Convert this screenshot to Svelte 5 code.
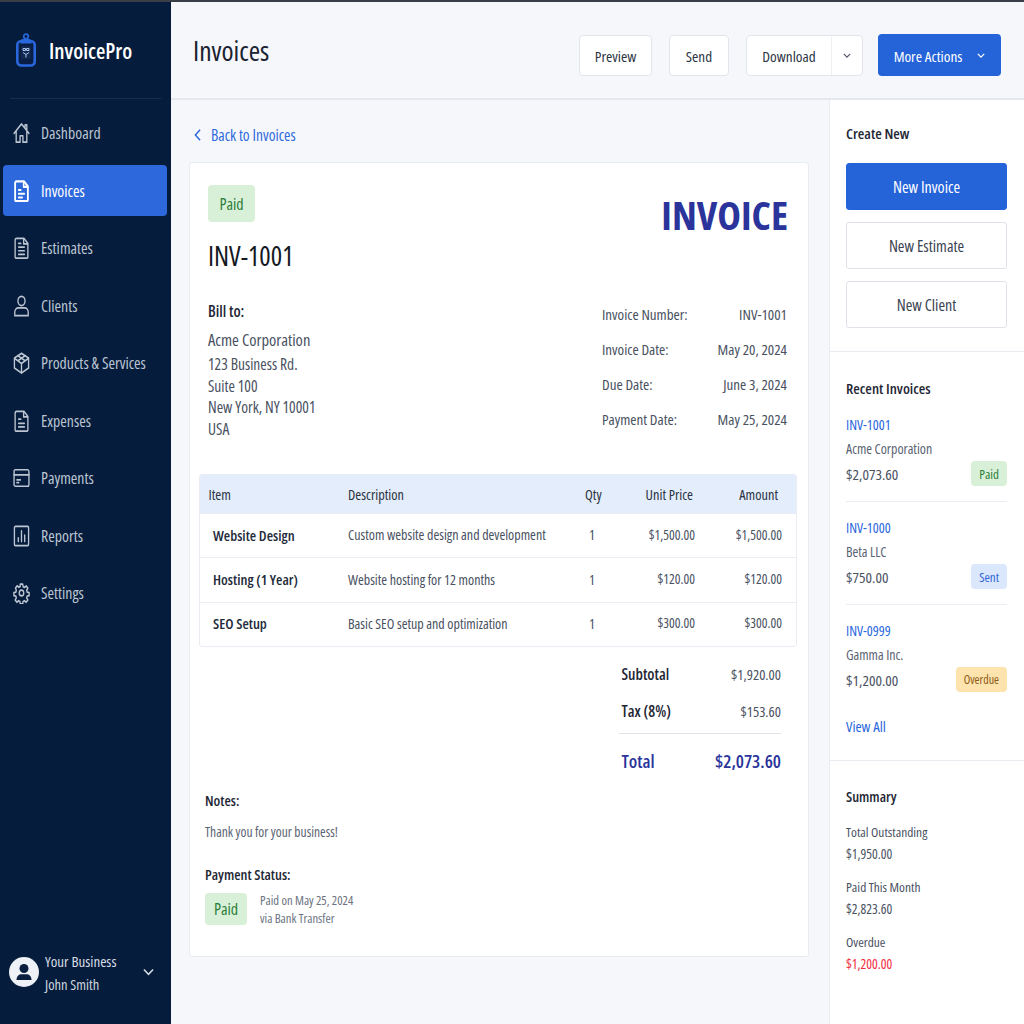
<script>
  const nav = [
    { label: 'Dashboard', icon: 'home' },
    { label: 'Invoices', icon: 'invoice', active: true },
    { label: 'Estimates', icon: 'doc' },
    { label: 'Clients', icon: 'user' },
    { label: 'Products & Services', icon: 'box' },
    { label: 'Expenses', icon: 'expense' },
    { label: 'Payments', icon: 'card' },
    { label: 'Reports', icon: 'chart' },
    { label: 'Settings', icon: 'gear' }
  ];
  const rows = [
    ['Website Design', 'Custom website design and development', '1', '$1,500.00', '$1,500.00'],
    ['Hosting (1 Year)', 'Website hosting for 12 months', '1', '$120.00', '$120.00'],
    ['SEO Setup', 'Basic SEO setup and optimization', '1', '$300.00', '$300.00']
  ];
  const meta = [
    ['Invoice Number:', 'INV-1001'],
    ['Invoice Date:', 'May 20, 2024'],
    ['Due Date:', 'June 3, 2024'],
    ['Payment Date:', 'May 25, 2024']
  ];
  const recent = [
    { id: 'INV-1001', client: 'Acme Corporation', amount: '$2,073.60', status: 'Paid', cls: 'paid' },
    { id: 'INV-1000', client: 'Beta LLC', amount: '$750.00', status: 'Sent', cls: 'sent' },
    { id: 'INV-0999', client: 'Gamma Inc.', amount: '$1,200.00', status: 'Overdue', cls: 'overdue' }
  ];
  const summary = [
    ['Total Outstanding', '$1,950.00', ''],
    ['Paid This Month', '$2,823.60', ''],
    ['Overdue', '$1,200.00', 'red']
  ];
</script>

<div class="app">
  <aside class="sidebar">
    <div class="brand">
      <svg class="logo" viewBox="0 0 22 34" width="22" height="34" fill="none">
        <circle cx="11" cy="3.500" r="2.300" stroke="#2867dc" stroke-width="1.700"/>
        <rect x="2.300" y="8" width="17.400" height="24.500" rx="4" fill="#0a1d44" stroke="#2867dc" stroke-width="2.600"/>
        <path d="M5.500 10.500V8.500C5.500 7 6.500 6 8 6h6c1.500 0 2.500 1 2.500 2.500v2z" fill="#2867dc"/>
        <rect x="6" y="13" width="10" height="13" rx="1" fill="#12294f"/>
        <path d="M8 15.500h2.500v2H8zM11.500 15.500H14v2h-2.500zM8 19.500l3 2 3-2M11 21.500v3" stroke="#a9c3ee" stroke-width="1"/>
      </svg>
      <span class="brand-name">InvoicePro</span>
    </div>
    <nav class="nav">
      {#each nav as item}
        <a class="nav-item" class:active={item.active} href="#top">
          <svg viewBox="0 0 24 24" width="17" height="22" preserveAspectRatio="none" fill="none" stroke="currentColor" stroke-width="1.900" stroke-linecap="round" stroke-linejoin="round">
            {#if item.icon === 'home'}
              <path d="M1.500 12.500 12 2l10.500 10.500M4.500 10v12h5.500v-7h4v7h5.500V10M17 6V3h2.500v5.500"/>
            {:else if item.icon === 'invoice'}
              <path d="M3 3A2 2 0 0 1 5 1.500h10.500L21 7v15a1.500 1.500 0 0 1-1.500 1H4.500A1.500 1.500 0 0 1 3 22z" stroke-width="2.600"/>
              <path d="M15 2v5.500h5.500M8 11h3M8 15h8M8 19h5" stroke-width="2.200"/>
            {:else if item.icon === 'doc'}
              <path d="M3 3A2 2 0 0 1 5 1.500h10.500L21 7v15a1.500 1.500 0 0 1-1.500 1H4.500A1.500 1.500 0 0 1 3 22z"/>
              <path d="M15 2v5.500h5.500M8 7h3M8 11h8M8 15h8M8 19h8"/>
            {:else if item.icon === 'user'}
              <circle cx="12" cy="6.500" r="5"/>
              <path d="M2.500 22.500v-3.500c0-3 2.500-5 5-5h9c2.500 0 5 2 5 5v3.500z"/>
            {:else if item.icon === 'box'}
              <path d="M12 1.500 22 6.500v11L12 23 2 17.500v-11z"/>
              <path d="M2.500 7 12 12.500 21.500 7M12 12.500V22.500M7 4l10 5.500M17 4 7 9.500"/>
            {:else if item.icon === 'expense'}
              <path d="M3 3A2 2 0 0 1 5 1.500h10.500L21 7v15a1.500 1.500 0 0 1-1.500 1H4.500A1.500 1.500 0 0 1 3 22z"/>
              <path d="M15 2v5.500h5.500M8 10h3M8 14.500h8M8 18.500h8"/>
            {:else if item.icon === 'card'}
              <rect x="1.500" y="3" width="21" height="18" rx="2"/>
              <path d="M1.500 8.500h21M5.500 14h5M5.500 17h2.500"/>
            {:else if item.icon === 'chart'}
              <rect x="2" y="1.500" width="20" height="21" rx="1.500"/>
              <path d="M7.500 18v-4M12 18V6.500M16.500 18v-7"/>
            {:else}
              <circle cx="12" cy="12" r="3.200"/>
              <path d="M10.300 2.500h3.400l.5 2.800 1.800.8 2.400-1.600 2.300 2.400-1.600 2.300.7 1.800 2.700.5v3.300l-2.700.5-.7 1.800 1.600 2.400-2.300 2.300-2.400-1.600-1.800.8-.5 2.700h-3.400l-.5-2.700-1.800-.8-2.400 1.600-2.300-2.300 1.600-2.400-.7-1.800-2.700-.5v-3.300l2.700-.5.700-1.800L3.700 6.700 6 4.300l2.400 1.600 1.800-.8z" transform="translate(-.3 -.3) scale(1.025)"/>
            {/if}
          </svg>
          <span>{item.label}</span>
        </a>
      {/each}
    </nav>
    <div class="account">
      <svg class="avatar" viewBox="0 0 30 30" width="30" height="30">
        <circle cx="15" cy="15" r="15" fill="#eef1f5"/>
        <circle cx="15" cy="11.500" r="4.500" fill="#0a1f40"/>
        <path d="M7.500 23c0-4 2.500-5.800 5-5.800h5c2.500 0 5 1.800 5 5.800z" fill="#0a1f40"/>
      </svg>
      <div class="account-text">
        <div class="biz">Your Business</div>
        <div class="person">John Smith</div>
      </div>
      <svg class="account-chev" viewBox="0 0 12 8" width="11" height="8" fill="none" stroke="#d3d9e2" stroke-width="1.700"><path d="M1 1.200 6 6.500l5-5.300"/></svg>
    </div>
  </aside>

  <div class="content">
    <header class="topbar">
      <h1>Invoices</h1>
      <div class="actions">
        <button class="btn preview">Preview</button>
        <button class="btn send">Send</button>
        <div class="btn split">
          <span class="split-label">Download</span>
          <span class="split-caret">
            <svg viewBox="0 0 10 6" width="8" height="5" fill="none" stroke="#4a5568" stroke-width="1.400"><path d="M1 1l4 4 4-4"/></svg>
          </span>
        </div>
        <button class="btn primary">
          More Actions
          <svg viewBox="0 0 10 6" width="8" height="5" fill="none" stroke="#fff" stroke-width="1.600"><path d="M1 1l4 4 4-4"/></svg>
        </button>
      </div>
    </header>

    <div class="body">
      <main class="main">
        <a class="back" href="#top">
          <svg viewBox="0 0 8 14" width="7" height="12" fill="none" stroke="#2a66dc" stroke-width="1.700"><path d="M7 1 1.500 7 7 13"/></svg>
          Back to Invoices
        </a>
        <section class="card">
          <div class="card-head">
            <div>
              <span class="badge-lg">Paid</span>
              <div class="inv-no">INV-1001</div>
            </div>
            <div class="inv-word">INVOICE</div>
          </div>

          <div class="parties">
            <div class="bill">
              <div class="bill-title">Bill to:</div>
              <div class="bill-name">Acme Corporation</div>
              <div>123 Business Rd.</div>
              <div>Suite 100</div>
              <div>New York, NY 10001</div>
              <div>USA</div>
            </div>
            <div class="meta">
              {#each meta as m}
                <div class="meta-row"><span>{m[0]}</span><span>{m[1]}</span></div>
              {/each}
            </div>
          </div>

          <div class="table">
            <div class="tr th">
              <span class="c-item">Item</span><span>Description</span><span class="c-qty">Qty</span><span class="num unit-h">Unit Price</span><span class="num amt-h">Amount</span>
            </div>
            {#each rows as r}
              <div class="tr td">
                <span class="c-item strong">{r[0]}</span><span>{r[1]}</span><span class="c-qty one">{r[2]}</span><span class="num">{r[3]}</span><span class="num">{r[4]}</span>
              </div>
            {/each}
          </div>

          <div class="totals">
            <div class="tot-row sub"><span>Subtotal</span><span>$1,920.00</span></div>
            <div class="tot-row tax"><span>Tax (8%)</span><span>$153.60</span></div>
            <div class="tot-row total"><span>Total</span><span>$2,073.60</span></div>
          </div>

          <div class="notes">
            <div class="label">Notes:</div>
            <div class="thanks">Thank you for your business!</div>
            <div class="label pay-label">Payment Status:</div>
            <div class="pay-row">
              <span class="badge-md">Paid</span>
              <div class="pay-text">
                <div>Paid on May 25, 2024</div>
                <div>via Bank Transfer</div>
              </div>
            </div>
          </div>
        </section>
      </main>

      <aside class="panel">
        <section class="p-create">
          <h3>Create New</h3>
          <button class="pbtn fill">New Invoice</button>
          <button class="pbtn">New Estimate</button>
          <button class="pbtn">New Client</button>
        </section>
        <section class="p-recent">
          <h3>Recent Invoices</h3>
          {#each recent as r}
            <div class="rec">
              <a class="rec-id" href="#top">{r.id}</a>
              <div class="rec-client">{r.client}</div>
              <div class="rec-line">
                <span class="rec-amt">{r.amount}</span>
                <span class="pill {r.cls}">{r.status}</span>
              </div>
            </div>
          {/each}
          <a class="view-all" href="#top">View All</a>
        </section>
        <section class="p-summary">
          <h3>Summary</h3>
          {#each summary as s}
            <div class="sum">
              <div class="sum-label">{s[0]}</div>
              <div class="sum-val {s[2]}">{s[1]}</div>
            </div>
          {/each}
        </section>
      </aside>
    </div>
  </div>
</div>

<style>
  :global(body) {
    margin: 0;
    background: #f5f7fb;
  }
  * { box-sizing: border-box; }
  a { text-decoration: none; color: inherit; }
  h1, h3 { margin: 0; }
  button { font: inherit; font-stretch: 75%; cursor: pointer; }

  .app {
    width: 1024px;
    height: 1024px;
    display: flex;
    overflow: hidden;
    font-family: "Open Sans", "Roboto", sans-serif;
    font-stretch: 75%;
    white-space: nowrap;
    font-size: 15px;
    color: #1c2433;
  }

  .sidebar {
    width: 171px;
    flex: none;
    background: #051c3d;
    color: #bcc5d1;
    display: flex;
    flex-direction: column;
    border-top: 2px solid #3a3f47;
  }
  .brand {
    height: 97px;
    margin: 0 10px;
    padding-left: 5px;
    display: flex;
    align-items: center;
    gap: 12px;
    border-bottom: 1px solid #15304f;
  }
  .brand-name { color: #fff; font-size: 21.500px; font-weight: 600; }
  .nav {
    display: flex;
    flex-direction: column;
    gap: 6.500px;
    padding: 8.500px 4px 0 3px;
  }
  .nav-item {
    height: 51px;
    display: flex;
    align-items: center;
    gap: 11.500px;
    padding-left: 9.500px;
    border-radius: 4px;
    font-size: 15.800px;
  }
  .nav-item.active { background: #2d68dc; color: #fff; }

  .account {
    margin-top: auto;
    height: 62px;
    margin-bottom: 21px;
    padding-left: 9px;
    display: flex;
    align-items: center;
    gap: 6px;
  }
  .avatar { flex: none; }
  .account-text { line-height: 23px; padding-top: 1px; }
  .biz { color: #d7dde5; font-size: 15px; font-weight: 500; }
  .person { color: #cfd6df; font-size: 14.500px; }
  .account-chev { margin-left: 21px; }

  .content { flex: 1; min-width: 0; display: flex; flex-direction: column; }

  .topbar {
    height: 100px;
    flex: none;
    padding: 0 23px 0 22px;
    display: flex;
    align-items: center;
    justify-content: space-between;
    border-top: 2px solid #3a3f47;
    border-bottom: 2px solid #e5e8ee;
    background: #f5f7fb;
  }
  .topbar h1 { font-size: 27.500px; font-weight: 500; color: #1a2230; padding-top: 1px; }
  .actions { display: flex; align-items: center; gap: 17px; margin-top: 10px; }
  .btn {
    height: 41px;
    padding: 1px 0 0;
    background: #fff;
    border: 1px solid #e2e6ec;
    border-radius: 4px;
    color: #2c3544;
    font-size: 15.200px;
    font-weight: 500;
    display: flex;
    align-items: center;
    justify-content: center;
  }
  .preview { width: 73px; }
  .send { width: 60px; }
  .split { width: 117px; }
  .split-label { width: 84px; text-align: center; }
  .split-caret { flex: 1; display: flex; justify-content: center; align-items: center; height: 100%; border-left: 1px solid #eef0f4; }
  .primary {
    width: 123px;
    height: 42px;
    margin-left: -2px;
    background: #2563d9;
    border: 0;
    color: #fff;
    gap: 15px;
  }

  .body { flex: 1; min-height: 0; display: flex; }
  .main { width: 658px; flex: none; padding: 24px 20px 0 18px; }
  .back {
    display: flex;
    align-items: center;
    gap: 10px;
    height: 22px;
    padding-left: 5px;
    color: #2f6bdc;
    font-size: 15.500px;
  }
  .card {
    margin-top: 16px;
    width: 620px;
    height: 795px;
    background: #fff;
    border: 1px solid #e8ebf0;
    border-radius: 3px;
    padding: 22px 11px 0 9px;
  }
  .card-head { display: flex; justify-content: space-between; padding: 0 9px 0 9px; }
  .badge-lg {
    display: inline-flex;
    width: 47px;
    height: 37px;
    align-items: center;
    justify-content: center;
    background: #d9f0d8;
    color: #2a7d38;
    border-radius: 4px;
    font-size: 16px;
  }
  .inv-no { margin-top: 17px; font-size: 26.800px; line-height: 34px; color: #14181f; font-weight: 500; }
  .inv-word { font-size: 40px; font-weight: 700; color: #2a349b; line-height: 50px; margin-top: 5px; }
  .parties { display: flex; justify-content: space-between; margin-top: 28px; padding: 0 10px 0 9px; color: #49515f; }
  .bill { line-height: 21.500px; font-size: 15.500px; }
  .bill-title { color: #1f2735; font-size: 15.500px; font-weight: 600; margin-bottom: 6px; }
  .bill-name { font-size: 16.500px; margin-bottom: 4px; }
  .meta { width: 185px; padding-top: 2px; font-size: 15px; }
  .meta-row { display: flex; justify-content: space-between; height: 35px; line-height: 22px; }

  .table {
    margin-top: 31px;
    border: 1px solid #e9ecf2;
    border-radius: 3px;
    overflow: hidden;
  }
  .tr {
    display: grid;
    grid-template-columns: 148px 219px 50px 78px 1fr;
    align-items: center;
    padding-right: 14px;
  }
  .th { height: 38px; background: #e4edfb; color: #2a3342; font-size: 14.300px; }
  .td { height: 44.300px; padding-bottom: 1.500px; border-top: 1px solid #e9ecf2; color: #49515f; font-size: 14px; }
  .td .num { font-size: 13.500px; }
  .c-item { padding-left: 8.500px; }
  .strong { padding-left: 13px; font-weight: 600; color: #232b3a; font-size: 14.600px; }
  .c-qty { text-align: left; padding-left: 18px; }
  .one { padding-left: 22px; }
  .num { text-align: right; }
  .unit-h { padding-right: 2px; }
  .amt-h { padding-right: 4px; }

  .totals { margin-left: 420px; margin-right: 16px; margin-top: 9px; }
  .tot-row { display: flex; justify-content: space-between; }
  .sub, .tax { height: 37px; line-height: 37px; color: #49515f; padding-left: 2.500px; font-size: 14.600px; }
  .sub span:first-child, .tax span:first-child { color: #1f2735; font-weight: 600; font-size: 15.500px; }
  .total {
    height: 54px;
    line-height: 54px;
    margin-top: 3px;
    padding-left: 2.500px;
    border-top: 1px solid #dfe3ea;
    color: #2a349b;
    font-size: 18.300px;
    font-weight: 600;
  }
  .notes { margin-top: 4px; padding-left: 6px; }
  .label { color: #1f2735; font-weight: 600; font-size: 14.500px; line-height: 20px; }
  .thanks { margin-top: 11px; color: #5a6373; font-size: 13.500px; line-height: 20px; }
  .pay-label { margin-top: 23px; }
  .pay-row { margin-top: 8px; display: flex; align-items: flex-start; gap: 13px; }
  .badge-md {
    width: 42px;
    height: 32px;
    border-radius: 4px;
    background: #d9f0d8;
    color: #2a7d38;
    font-size: 16px;
    font-weight: 500;
    display: flex;
    align-items: center;
    justify-content: center;
  }
  .pay-text { margin-top: -1px; color: #6a7280; font-size: 12.600px; line-height: 18px; }

  .panel {
    flex: 1;
    background: #fff;
    border-left: 1px solid #e8ebf0;
    display: flex;
    flex-direction: column;
  }
  .panel h3 { font-size: 15px; font-weight: 600; color: #1f2735; line-height: 20px; }
  .panel section { padding: 0 17px 0 16px; }
  .p-create { height: 252px; padding-top: 23px !important; border-bottom: 1px solid #e8ebf0; }
  .pbtn {
    display: block;
    width: 161px;
    height: 47px;
    margin-bottom: 12px;
    background: #fff;
    border: 1px solid #dfe3e9;
    border-radius: 3px;
    color: #3a4352;
    font-size: 16px;
    font-weight: 500;
  }
  .p-create h3 { margin-bottom: 20px; }
  .pbtn.fill { background: #2563d9; border-color: #2563d9; color: #fff; }
  .p-recent { height: 409px; padding-top: 26px !important; border-bottom: 1px solid #e8ebf0; }
  .rec { height: 103px; padding-top: 16px; border-bottom: 1px solid #e9edf4; }
  .rec:nth-of-type(3) { border-bottom: 0; }
  .p-recent h3 { margin-bottom: 1px; }
  .rec-id { display: block; color: #2866dc; font-size: 14px; line-height: 20px; font-weight: 500; }
  .rec-client { color: #5a6373; font-size: 13.900px; line-height: 20px; margin-top: 4px; }
  .rec-line { display: flex; justify-content: space-between; align-items: center; height: 25px; margin-top: 2px; }
  .rec-amt { color: #49515f; font-size: 15.300px; }
  .pill {
    height: 25px;
    padding: 0 8px;
    border-radius: 4px;
    font-size: 13px;
    display: flex;
    align-items: center;
  }
  .paid { background: #d9f0d8; color: #2a7d38; }
  .sent { background: #dbe7fc; color: #2f66d4; }
  .overdue { background: #fde3ae; color: #8b5a14; font-size: 12px; }
  .view-all { display: block; color: #2866dc; font-size: 14.800px; margin-top: 8px; }
  .p-summary { padding-top: 26px !important; }
  .p-summary h3 { margin-bottom: 15px; font-size: 14.500px; }
  .sum { margin-bottom: 12px; line-height: 21.500px; }
  .sum-label { color: #49515f; font-size: 13.400px; }
  .sum-val { color: #49515f; font-size: 13.500px; }
  .sum-val.red { color: #ef2b3c; }
</style>
